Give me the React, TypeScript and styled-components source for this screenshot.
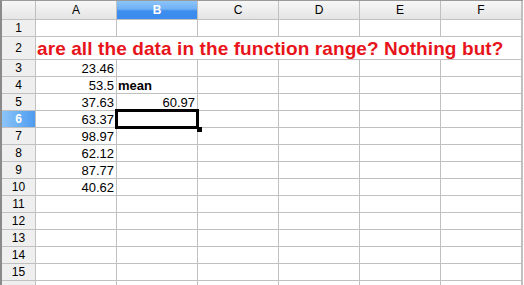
import styled, { createGlobalStyle } from 'styled-components';

const GlobalStyle = createGlobalStyle`
    html, body {
        margin: 0;
        padding: 0;
        background: #ffffff;
        overflow: hidden;
    }
`;

const Sheet = styled.div`
    display: grid;
    grid-template-columns: 33px repeat(6, 80px);
    grid-template-rows: 18px 16px 22px repeat(14, 16px);
    gap: 1px;
    width: 520px;
    height: 285px;
    overflow: hidden;
    background: #c0c0c0;
    border-left: 2px solid #8a8a8a;
    border-top: 1px solid #9a9a9a;
    padding-right: 1px;
    font-family: "Liberation Sans", Arial, sans-serif;
    font-size: 13px;
    color: #000;
`;

const Corner = styled.div`
    background: linear-gradient(#f6f6f6, #e6e6e6);
`;

const ColHead = styled.div<{ $active?: boolean }>`
    display: flex;
    align-items: center;
    justify-content: center;
    font-size: 12px;
    background: ${p => p.$active
        ? 'linear-gradient(#8cc4f8 0%, #6fb0f4 45%, #3d8eee 55%, #3b8bec 100%)'
        : 'linear-gradient(#f7f7f7, #e4e4e4)'};
    color: ${p => (p.$active ? '#ffffff' : '#000')};
    font-weight: ${p => (p.$active ? 700 : 400)};
`;

const RowHead = styled.div<{ $active?: boolean }>`
    display: flex;
    align-items: center;
    justify-content: center;
    font-size: 12px;
    background: ${p => p.$active
        ? 'linear-gradient(90deg, #8cc4f8, #4e9cf0)'
        : '#efefef'};
    color: ${p => (p.$active ? '#ffffff' : '#000')};
    font-weight: ${p => (p.$active ? 700 : 400)};
`;

const Cell = styled.div<{ $align?: 'left' | 'right'; $bold?: boolean }>`
    background: #fff;
    display: flex;
    align-items: flex-end;
    justify-content: ${p => (p.$align === 'right' ? 'flex-end' : 'flex-start')};
    padding: 0 2px 0 1px;
    line-height: 15px;
    font-weight: ${p => (p.$bold ? 700 : 400)};
    white-space: nowrap;
`;

const ActiveCell = styled.div`
    position: relative;
    background: #fff;
    outline: 2px solid #000;
    box-shadow: inset 0 0 0 1px #000;
    z-index: 1;
`;

const Handle = styled.span`
    position: absolute;
    right: -5px;
    bottom: -5px;
    width: 5px;
    height: 5px;
    background: #000;
`;

const Title = styled.div`
    grid-column: span 6;
    background: #fff;
    display: flex;
    align-items: flex-end;
    padding-left: 1px;
    color: #e8141b;
    font-weight: 700;
    font-size: 19px;
    letter-spacing: 0.1px;
    line-height: 21px;
    white-space: nowrap;
`;

const columns = ['A', 'B', 'C', 'D', 'E', 'F'];

const values: Record<number, string> = {
    3: '23.46', 4: '53.5', 5: '37.63', 6: '63.37',
    7: '98.97', 8: '62.12', 9: '87.77', 10: '40.62',
};

const rowNums = Array.from({ length: 15 }, (_, i) => i + 1);

export default function App() {
    return (
        <>
            <GlobalStyle />
            <Sheet>
                <Corner />
                {columns.map(c => (
                    <ColHead key={c} $active={c === 'B'}>{c}</ColHead>
                ))}
                {rowNums.map(r => {
                    if (r === 2) {
                        return [
                            <RowHead key="h2">2</RowHead>,
                            <Title key="t">are all the data in the function range? Nothing but?</Title>,
                        ];
                    }
                    return [
                        <RowHead key={'h' + r} $active={r === 6}>{r}</RowHead>,
                        <Cell key={'a' + r} $align="right">{values[r] ?? ''}</Cell>,
                        r === 6 ? (
                            <ActiveCell key="b6"><Handle /></ActiveCell>
                        ) : r === 4 ? (
                            <Cell key="b4" $bold>mean</Cell>
                        ) : r === 5 ? (
                            <Cell key="b5" $align="right">60.97</Cell>
                        ) : (
                            <Cell key={'b' + r} />
                        ),
                        <Cell key={'c' + r} />,
                        <Cell key={'d' + r} />,
                        <Cell key={'e' + r} />,
                        <Cell key={'f' + r} />,
                    ];
                })}
                <RowHead />
                {columns.map(c => <Cell key={'x' + c} />)}
            </Sheet>
        </>
    );
}
